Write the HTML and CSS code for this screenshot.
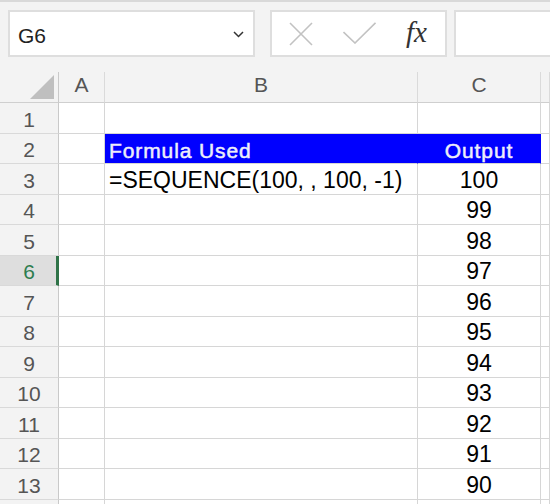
FILE: index.html
```html
<!DOCTYPE html>
<html lang="en">
<head>
<meta charset="utf-8">
<title>SEQUENCE example</title>
<link rel="stylesheet" href="styles.css">
</head>
<body>
<div class="window">
  <div class="toolbar">
    <div class="namebox">
      <span class="name">G6</span>
      <svg class="chev" width="11" height="7" viewBox="0 0 11 7"><polyline points="1,1 5.5,5.5 10,1" fill="none" stroke="#333" stroke-width="1.5"/></svg>
    </div>
    <div class="fbuttons">
      <svg class="icon-x" width="24" height="24" viewBox="0 0 24 24"><path d="M1 1 L23 23 M23 1 L1 23" fill="none" stroke="#c2c2c2" stroke-width="1.6"/></svg>
      <svg class="icon-check" width="33" height="22" viewBox="0 0 33 22"><polyline points="0.5,10 12,21 32.5,0.8" fill="none" stroke="#c2c2c2" stroke-width="1.6"/></svg>
      <span class="fx">fx</span>
    </div>
    <div class="finput"></div>
  </div>
  <div class="sheet">
    <div class="corner"><svg width="24" height="24" viewBox="0 0 24 24"><polygon points="24,0 24,24 0,24" fill="#bfbfbf"/></svg></div>
    <div class="colhead">A</div>
    <div class="colhead">B</div>
    <div class="colhead">C</div>
    <div class="colhead"></div>

    <div class="rowhead">1</div><div class="cell"></div><div class="cell"></div><div class="cell"></div><div class="cell"></div>
    <div class="rowhead">2</div><div class="cell"></div><div class="cell hdr">Formula Used</div><div class="cell hdr num">Output</div><div class="cell"></div>
    <div class="rowhead">3</div><div class="cell"></div><div class="cell">=SEQUENCE(100, , 100, -1)</div><div class="cell num">100</div><div class="cell"></div>
    <div class="rowhead">4</div><div class="cell"></div><div class="cell"></div><div class="cell num">99</div><div class="cell"></div>
    <div class="rowhead">5</div><div class="cell"></div><div class="cell"></div><div class="cell num">98</div><div class="cell"></div>
    <div class="rowhead sel">6</div><div class="cell"></div><div class="cell"></div><div class="cell num">97</div><div class="cell"></div>
    <div class="rowhead">7</div><div class="cell"></div><div class="cell"></div><div class="cell num">96</div><div class="cell"></div>
    <div class="rowhead">8</div><div class="cell"></div><div class="cell"></div><div class="cell num">95</div><div class="cell"></div>
    <div class="rowhead">9</div><div class="cell"></div><div class="cell"></div><div class="cell num">94</div><div class="cell"></div>
    <div class="rowhead">10</div><div class="cell"></div><div class="cell"></div><div class="cell num">93</div><div class="cell"></div>
    <div class="rowhead">11</div><div class="cell"></div><div class="cell"></div><div class="cell num">92</div><div class="cell"></div>
    <div class="rowhead">12</div><div class="cell"></div><div class="cell"></div><div class="cell num">91</div><div class="cell"></div>
    <div class="rowhead">13</div><div class="cell"></div><div class="cell"></div><div class="cell num">90</div><div class="cell"></div>
    <div class="rowhead"></div><div class="cell"></div><div class="cell"></div><div class="cell"></div><div class="cell"></div>
  </div>
</div>
</body>
</html>
```

FILE: styles.css
```css
* {
  box-sizing: border-box;
}

html, body {
  margin: 0;
  padding: 0;
}

body {
  width: 550px;
  height: 504px;
  overflow: hidden;
  background: #f3f3f3;
  font-family: "Liberation Sans", Arial, sans-serif;
}

.window {
  width: 550px;
  height: 504px;
  overflow: hidden;
}

/* ---------- formula bar ---------- */
.toolbar {
  height: 72px;
  border-top: 2px solid #d9d9d9;
  padding: 8px 0 0 8px;
  display: flex;
  align-items: flex-start;
  overflow: hidden;
}

.namebox {
  flex: 0 0 247px;
  height: 47px;
  background: #fff;
  border: 2px solid #dedede;
  display: flex;
  align-items: center;
  justify-content: space-between;
  padding: 5px 9px 0 8px;
}

.name {
  font-size: 21px;
  color: #222;
}

.chev {
  display: block;
  margin-top: -3px;
}

.fbuttons {
  flex: 0 0 177px;
  margin-left: 15px;
  height: 47px;
  background: #fff;
  border: 2px solid #dedede;
  display: flex;
  align-items: center;
  padding-left: 17px;
}

.icon-x {
  display: block;
}

.icon-check {
  display: block;
  margin-left: 30px;
  margin-top: -2px;
}

.fx {
  margin-left: 30px;
  font-family: "Liberation Serif", "Times New Roman", serif;
  font-style: italic;
  font-size: 29px;
  color: #333;
  line-height: 1;
  margin-top: -2px;
}

.finput {
  flex: 0 0 120px;
  margin-left: 7px;
  height: 47px;
  background: #fff;
  border: 2px solid #dedede;
  border-right: none;
}

/* ---------- grid ---------- */
.sheet {
  display: grid;
  grid-template-columns: 59px 46px 313px 123px 1fr;
  grid-template-rows: 31px repeat(14, 30.5px);
  background: #fff;
}

.corner {
  background: #f3f3f3;
  border-right: 1px solid #c9c9c9;
  border-bottom: 1px solid #cfcfcf;
  display: flex;
  align-items: flex-end;
  justify-content: flex-end;
  padding: 0 4px 3px 0;
}

.corner svg {
  display: block;
}

.colhead {
  background: #f3f3f3;
  border-right: 1px solid #dadada;
  border-bottom: 1px solid #cfcfcf;
  color: #555;
  font-size: 21px;
  display: flex;
  align-items: center;
  justify-content: center;
  padding-bottom: 5px;
}

.rowhead {
  background: #f3f3f3;
  border-right: 1px solid #c9c9c9;
  border-bottom: 1px solid #d9d9d9;
  color: #555;
  font-size: 21px;
  display: flex;
  align-items: center;
  justify-content: center;
  padding-top: 4px;
}

.rowhead.sel {
  background: #dedede;
  color: #2e7d4f;
  border-right: 3px solid #2f7348;
  padding-left: 2px;
}

.cell {
  border-right: 1px solid #d6d6d6;
  border-bottom: 1px solid #d6d6d6;
  display: flex;
  align-items: flex-end;
  padding: 0 4px 2px;
  font-size: 23px;
  line-height: 23px;
  color: #000;
  white-space: nowrap;
}

.num {
  justify-content: center;
}

.hdr {
  background: #0000ff;
  color: #eeeefa;
  font-size: 21px;
  line-height: 21px;
  letter-spacing: 0.9px;
  -webkit-text-stroke: 0.5px #eeeefa;
  border-right-color: #0000ff;
}
```
